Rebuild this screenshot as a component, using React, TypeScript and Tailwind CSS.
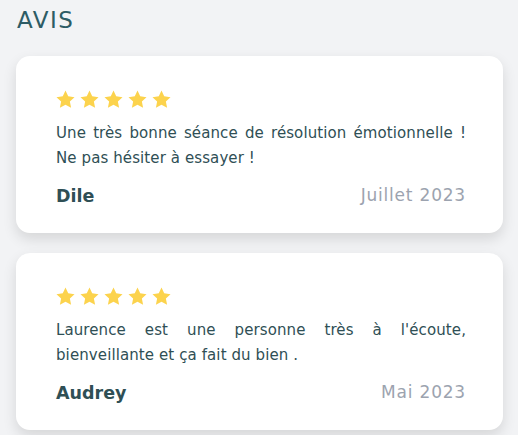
const reviews = [
  {
    text: "Une très bonne séance de résolution émotionnelle ! Ne pas hésiter à essayer !",
    name: "Dile",
    date: "Juillet 2023",
  },
  {
    text: "Laurence est une personne très à l'écoute, bienveillante et ça fait du bien .",
    name: "Audrey",
    date: "Mai 2023",
  },
];

function Star() {
  return (
    <svg viewBox="0 0 24 24" className="h-[21px] w-[21px]" fill="#fcd34d">
      <path d="M12 1.8l3.1 6.6 7.2.9-5.3 5 1.4 7.2L12 18l-6.4 3.5L7 14.3l-5.3-5 7.2-.9z" />
    </svg>
  );
}

export default function App() {
  return (
    <div
      className="min-h-[435px] bg-[#f2f3f5] pl-4 pr-[15px] pt-[5px]"
      style={{ fontFamily: '"DejaVu Sans", "Liberation Sans", sans-serif' }}
    >
      <h2 className="pl-[1px] text-[23px] leading-[30px] tracking-[1.5px] text-[#2d5c65]">
        AVIS
      </h2>
      <div className="mt-[21px] flex flex-col gap-5">
        {reviews.map((r) => (
          <div
            key={r.name}
            className="h-[177px] rounded-[14px] bg-white pl-10 pr-[37px] pt-[33px] shadow-[0_6px_14px_rgba(0,0,0,0.12)]"
          >
            <div className="-ml-[1px] flex gap-[3px]">
              {[0, 1, 2, 3, 4].map((i) => (
                <Star key={i} />
              ))}
            </div>
            <p className="mt-[11px] text-justify text-[15px] leading-[25px] tracking-[0.1px] text-[#2f4f55]">
              {r.text}
            </p>
            <div className="mt-[12px] flex items-center justify-between">
              <span className="text-[17.5px] font-bold text-[#2f4f55]">{r.name}</span>
              <span className="text-[17px] tracking-[0.8px] text-[#9ca3af]">{r.date}</span>
            </div>
          </div>
        ))}
      </div>
    </div>
  );
}
